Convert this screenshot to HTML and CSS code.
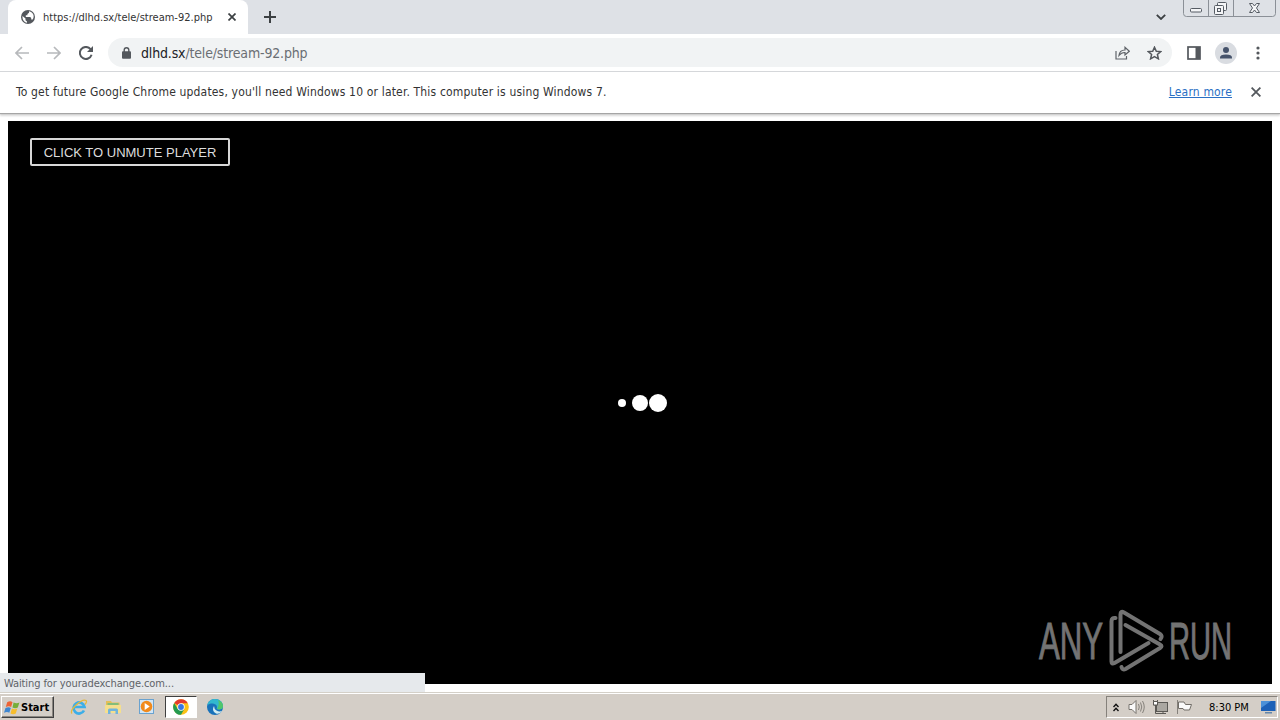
FILE: index.html
```html
<!DOCTYPE html>
<html lang="en">
<head>
  <meta charset="UTF-8">
  <title>https://dlhd.sx/tele/stream-92.php</title>
  <link rel="stylesheet" href="styles.css">
</head>
<body>

  <!-- Tab strip -->
  <div class="tabstrip">
    <div class="tab">
      <svg class="globe" width="14" height="14" viewBox="0 0 14 14"><circle cx="7" cy="7" r="7" fill="#54585d"/><path d="M1.500 6l3 2.600v1.600L6 11.500v1.300C3 12.200 1.200 9.600 1.500 6zM8 1.300v1.500L6.400 4v1.300H4.800V7h4.400l1 1v1.500h1.500C13.800 6.400 12.500 2.300 8 1.300z" fill="#fff"/></svg>
      <span class="tab-title">https://dlhd.sx/tele/stream-92.php</span>
      <svg class="tab-close" width="8" height="8" viewBox="0 0 8 8"><path d="M.5.5l7 7M7.500.5l-7 7" stroke="#3c4043" stroke-width="1.700"/></svg>
    </div>
    <svg class="new-tab" width="12" height="12" viewBox="0 0 12 12"><path d="M6 0v12M0 6h12" stroke="#3c4043" stroke-width="2"/></svg>
    <svg class="tab-search" width="10" height="6" viewBox="0 0 10 6"><path d="M.8.8L5 5 9.200.8" fill="none" stroke="#3c4043" stroke-width="1.800"/></svg>
    <div class="win-buttons">
      <svg width="94" height="18" viewBox="0 0 94 18">
        <path d="M.5 0v13.500q0 3 3 3h86q3 0 3-3V0M25.500 0v16.500M50.500 0v16.500" fill="none" stroke="#8b9097"/>
        <g fill="#f4f5f7" stroke="#555b63">
          <rect x="7.500" y="8.500" width="11" height="3.500" rx="1"/>
          <rect x="34.500" y="2.500" width="9" height="8" rx="1"/>
          <rect x="31.500" y="5.500" width="9" height="9" rx="1"/>
          <rect x="34.500" y="8.500" width="3" height="3"/>
          <path d="M66.500 3.500h3l2 2.500 2-2.500h3l-3 4.500 3 4.500h-3l-2-2.500-2 2.500h-3l3-4.500z"/>
        </g>
      </svg>
    </div>
  </div>

  <!-- Toolbar -->
  <div class="toolbar">
    <svg class="back" width="14" height="14" viewBox="0 0 14 14"><path d="M14 7H1.500M7 1L1 7l6 6" fill="none" stroke="#b7b9bc" stroke-width="1.700"/></svg>
    <svg class="forward" width="14" height="14" viewBox="0 0 14 14"><path d="M0 7h12.500M7 1l6 6-6 6" fill="none" stroke="#b7b9bc" stroke-width="1.700"/></svg>
    <svg class="reload" width="14" height="14" viewBox="0 0 14 14"><path d="M12.600 8.800A6 6 0 1 1 11.500 3.100L13 4.600" fill="none" stroke="#54585d" stroke-width="2"/><path d="M14 0v6H8z" fill="#54585d"/></svg>
    <div class="omnibox">
      <svg width="9" height="12" viewBox="0 0 9 12"><path d="M2.200 5V3a2.300 2.300 0 0 1 4.600 0v2" fill="none" stroke="#54585d" stroke-width="1.400"/><rect y="4.200" width="9" height="7.500" rx="1" fill="#54585d"/></svg>
      <span class="url"><b>dlhd.sx</b>/tele/stream-92.php</span>
      <svg class="share" width="15" height="14" viewBox="0 0 15 14" fill="none" stroke="#5f6368" stroke-width="1.200"><path d="M1 5v8h10.500v-3M4 9.500q.5-5.500 6-5.500V1.300l4.300 3.900L10 9V6.500Q6.500 6.300 4 9.500z"/></svg>
      <svg class="star" width="15" height="14" viewBox="0 0 15 14"><path d="M7.500 1.200l1.800 4 4.400.4-3.300 2.900 1 4.300-3.900-2.300-3.900 2.300 1-4.300L1.300 5.600l4.400-.4z" fill="none" stroke="#54585d" stroke-width="1.500"/></svg>
    </div>
    <svg class="panel" width="14" height="14" viewBox="0 0 14 14"><rect x="1" y="1" width="12" height="12" fill="none" stroke="#54585d" stroke-width="1.700"/><path d="M8.500 1H13v12H8.500z" fill="#54585d"/></svg>
    <svg class="avatar" width="22" height="22" viewBox="0 0 22 22"><circle cx="11" cy="11" r="11" fill="#d9dce1"/><circle cx="11" cy="8" r="3" fill="#46536b"/><path d="M5 16.500v-1q0-3 6-3t6 3v1z" fill="#46536b"/></svg>
    <svg class="menu" width="4" height="14" viewBox="0 0 4 14" fill="#54585d"><circle cx="2" cy="2" r="1.600"/><circle cx="2" cy="7" r="1.600"/><circle cx="2" cy="12" r="1.600"/></svg>
  </div>

  <!-- Update notice -->
  <div class="infobar">
    <span class="notice">To get future Google Chrome updates, you'll need Windows 10 or later. This computer is using Windows 7.</span>
    <a class="learn" href="#">Learn more</a>
    <svg width="10" height="10" viewBox="0 0 10 10"><path d="M.6.6l8.800 8.800M9.400.6L.6 9.400" stroke="#54585d" stroke-width="1.800"/></svg>
  </div>

  <!-- Page content -->
  <div class="page">
    <div class="player">
      <button class="unmute">CLICK TO UNMUTE PLAYER</button>
      <div class="loader"><i class="dot small"></i><i class="dot medium"></i><i class="dot large"></i></div>
      <svg class="watermark" width="220" height="70" viewBox="0 0 220 70">
        <g class="brand">
          <text transform="translate(5 54) scale(.6 1)">ANY</text>
          <text transform="translate(135 54) scale(.56 1)">RUN</text>
        </g>
        <g fill="none" stroke="#737373" stroke-width="4" stroke-linejoin="round" stroke-linecap="round">
          <path d="M81.500 13q-4-.5-4 3.500v40q0 3 3 1.500L114.500 38"/>
          <path d="M86.500 47V9.500q0-4 3.500-2L126 29q3 2 .5 5"/>
          <path d="M91.500 20L126 39.500q3 1.500 0 3.500L91.500 64q-3 1.500-4-2"/>
        </g>
      </svg>
    </div>
    <div class="status"><span>Waiting for youradexchange.com...</span></div>
  </div>

  <!-- Taskbar -->
  <div class="taskbar">
    <div class="start">
      <svg width="17" height="17" viewBox="0 0 16 16"><path d="M3 3q3-2 5 0L6.700 7.500q-2-1.500-5 0z" fill="#ed6335"/><path d="M9 3.300q3 1.500 5.500 0L13 8q-2.500 1.200-5 0z" fill="#77ae3a"/><path d="M1.400 8.500q3-1.600 5 0L5 13q-2-1.600-5 0z" fill="#3e86d0"/><path d="M7.500 9q2.500 1.300 5 0l-1.400 4.700q-2.500 1.200-5 0z" fill="#f7bd2c"/></svg>
      <span>Start</span>
    </div>
    <div class="quick">
      <div class="app"><svg width="18" height="18" viewBox="0 0 18 18"><path d="M14 12.500A5.500 5.500 0 1 1 14.500 9H5" fill="none" stroke="#3caee8" stroke-width="2.700"/><path d="M2 15.500C-1 12 12 0 16 2.500q1.300 1.300-1 4" fill="none" stroke="#e5b83b" stroke-width="1.300"/></svg></div>
      <div class="app"><svg width="18" height="18" viewBox="0 0 18 18"><path d="M2 3h5l1 1.500h7.500V14H2z" fill="#e4bf57"/><path d="M3.500 5h11v3h-11z" fill="#84bd79"/><path d="M1 7h16v8H1z" fill="#f5df8d"/><path d="M4 16v-4q0-1.500 1.500-1.500h7q1.500 0 1.500 1.500v4h-2.500v-3h-5v3z" fill="#71b4dc"/></svg></div>
      <div class="app"><svg width="18" height="18" viewBox="0 0 18 18"><rect x="1.500" y="1.500" width="14" height="14" fill="#d3e6f5" stroke="#6aa2cf"/><circle cx="8.500" cy="8.500" r="5.800" fill="#f18a1c"/><path d="M6.700 5v7l5-3.500z" fill="#fff"/></svg></div>
      <div class="app active"><svg width="16" height="16" viewBox="0 0 16 16"><circle cx="8" cy="8" r="7.800" fill="#fbc116"/><path d="M8 8L1.200 4.100A7.800 7.800 0 0 1 14.800 4.200H8z" fill="#e33b2e"/><path d="M1.200 4.100A7.800 7.800 0 0 0 8 15.800L11.300 10 8 8 4.700 10z" fill="#249a50"/><circle cx="8" cy="8" r="3.700" fill="#fff"/><circle cx="8" cy="8" r="2.900" fill="#3777e3"/></svg></div>
      <div class="app"><svg width="18" height="18" viewBox="0 0 18 18"><circle cx="9" cy="9" r="8" fill="#1972ba"/><path d="M1.300 7.500C2 3 5.500 1 9 1c5 0 8 3.500 8 7 0 3-3 4-5.500 3.300C10 11 11 10.500 11 9 11 5.500 4.500 4 1.300 7.500z" fill="#32b8ce"/><path d="M12 2q5 2 5 6 0 3-3.500 3.500L11 11q3-5 1-9z" fill="#51c66b"/><path d="M8 8q-3 5 2 7.500 4 1 6-2.500-3 1-5.500-.5T8 8z" fill="#d3edf1"/></svg></div>
    </div>
    <div class="tray">
      <svg class="chevrons" width="6" height="9" viewBox="0 0 6 9"><path d="M.5 4L3 1.300 5.500 4M.5 8L3 5.300 5.500 8" fill="none" stroke="#111" stroke-width="1.400"/></svg>
      <svg width="17" height="16" viewBox="0 0 17 16"><path d="M1 5.500h3L8 1.500v13l-4-4H1z" fill="#fafafa" stroke="#77736d"/><path d="M10.500 5q1.500 3 0 6M12.500 3.500q2.500 4.500 0 9M14.500 2q3.500 6 0 12" fill="none" stroke="#85817b"/></svg>
      <svg width="17" height="16" viewBox="0 0 17 16"><rect x="4.500" y="3.500" width="11" height="9" fill="#aaa7a1" stroke="#5b5955"/><path d="M1.500 1v5h4V1M3.500 6v8.500h6M8 14.500h6M11 12.500v2" fill="none" stroke="#5b5955"/><path d="M1.500 2.500h4V6h-4z" fill="#fff" stroke="#5b5955"/></svg>
      <svg width="17" height="16" viewBox="0 0 17 16"><path d="M2.500 3H8l1.500 2.500h6L13.500 11H8l-1-1.500H2.500z" fill="#fafafa" stroke="#716d67"/><path d="M1.500 1v14" stroke="#85817b"/></svg>
      <span class="clock">8:30 PM</span>
      <svg width="16" height="14" viewBox="0 0 16 14"><path d="M1 1h14.500v10H1z" fill="#1d61b7"/><path d="M1 1h10L1 8z" fill="#4c91d8"/><path d="M5 12h7v1.500H5z" fill="#6386aa"/></svg>
    </div>
  </div>

</body>
</html>
```

FILE: styles.css
```css
* {
  box-sizing: border-box;
}

body {
  margin: 0;
  width: 1280px;
  height: 720px;
  overflow: hidden;
  display: flex;
  flex-direction: column;
  background: #fff;
  font-family: "DejaVu Sans Condensed", "DejaVu Sans", sans-serif;
  color: #333;
}

svg {
  display: block;
  flex: none;
}

span,
a {
  white-space: nowrap;
}

/* Tab strip */
.tabstrip {
  flex: none;
  height: 34px;
  display: flex;
  align-items: center;
  background: #dee1e6;
}

.tab {
  width: 240px;
  height: 34px;
  margin-left: 8px;
  padding-left: 13px;
  display: flex;
  align-items: center;
  background: #fff;
  border-radius: 8px 8px 0 0;
}

.tab-title {
  width: 170px;
  margin-left: 8px;
  font-size: 11px;
}

.tab-close {
  margin-left: 15px;
}

.new-tab {
  margin-left: 16px;
}

.tab-search {
  margin-left: auto;
}

.win-buttons {
  height: 34px;
  margin: 0 3px 0 17px;
}

/* Toolbar */
.toolbar {
  flex: none;
  height: 38px;
  padding-left: 15px;
  display: flex;
  align-items: center;
  border-bottom: 1px solid #d5d7da;
}

.forward,
.reload {
  margin-left: 18px;
}

.omnibox {
  width: 1064px;
  height: 29px;
  margin-left: 15px;
  padding: 0 10px 0 14px;
  display: flex;
  align-items: center;
  background: #f1f3f4;
  border-radius: 15px;
}

.url {
  margin-left: 10px;
  font-size: 14px;
  letter-spacing: -0.16px;
  color: #6a6e73;
}

.url b {
  font-weight: normal;
  color: #202124;
}

.share {
  margin-left: auto;
}

.star {
  margin-left: 17px;
}

.panel {
  margin-left: 15px;
}

.avatar {
  margin-left: 14px;
}

.menu {
  margin-left: 19px;
}

/* Update notice */
.infobar {
  flex: none;
  position: relative;
  height: 41px;
  padding: 0 19px 1px 16px;
  display: flex;
  align-items: center;
  font-size: 12px;
  letter-spacing: 0.165px;
  box-shadow: 0 1px 1px #a5a5a5, 0 3px 2px #d9d9d9;
}

.learn {
  margin: 0 19px 0 auto;
  color: #2a6fc4;
}

/* Page content */
.page {
  flex: 1;
  position: relative;
  padding: 8px 8px 0;
}

.player {
  position: relative;
  height: 563px;
  padding: 17px 22px;
  background: #000;
}

.unmute {
  display: block;
  width: 200px;
  height: 28px;
  padding: 0;
  border: 2px solid #d8d8d8;
  border-radius: 2px;
  background: #000;
  color: #ddd;
  font: 13px "Liberation Sans", Arial, sans-serif;
}

.loader {
  position: absolute;
  top: 273px;
  left: 609px;
  height: 18px;
  display: flex;
  align-items: center;
}

.dot {
  border-radius: 50%;
  background: #fff;
}

.small {
  width: 8px;
  height: 8px;
  margin: 0 6px 0 1px;
}

.medium {
  width: 16px;
  height: 16px;
}

.large {
  width: 18px;
  height: 18px;
  margin-left: 1px;
}

.watermark {
  position: absolute;
  top: 484px;
  left: 1026px;
}

.brand {
  fill: #737373;
  stroke: #737373;
  stroke-width: 1px;
  font: 52px "Liberation Sans", Arial, sans-serif;
}

/* Link status bubble over the player */
.status {
  position: absolute;
  left: 0;
  bottom: 0;
  width: 425px;
  height: 19px;
  padding-left: 4px;
  background: #e6e9ec;
  color: #5f6368;
  font-size: 11px;
  letter-spacing: -0.1px;
  line-height: 21px;
}

/* Taskbar */
.taskbar {
  flex: none;
  height: 28px;
  padding: 1px 2px 0 1px;
  display: flex;
  align-items: center;
  background: #d4cec7;
  border-top: 1px solid #d4d0c8;
  box-shadow: inset 0 1px #fff;
}

.start {
  width: 53px;
  height: 22px;
  padding-left: 2px;
  display: flex;
  align-items: center;
  border: 1px solid;
  border-color: #fff #404040 #404040 #fff;
  box-shadow: inset -1px -1px #8a8680;
  color: #000;
  font-size: 11px;
  font-weight: bold;
}

.quick {
  display: flex;
  margin-left: 9px;
  gap: 2px;
}

.app {
  width: 32px;
  height: 22px;
  display: flex;
  align-items: center;
  justify-content: center;
}

.active {
  background: #fff;
  border: 1px solid;
  border-color: #404040 #fff #fff #404040;
}

.tray {
  width: 172px;
  height: 22px;
  margin-left: auto;
  padding-left: 6px;
  display: flex;
  align-items: center;
  border: 1px solid;
  border-color: #85817b #fff #fff #85817b;
}

.tray svg + svg {
  margin-left: 7px;
}

.tray .chevrons + svg {
  margin-left: 9px;
}

.clock {
  width: 40px;
  margin: 0 11px 0 16px;
  color: #000;
  font-size: 11px;
}
```
